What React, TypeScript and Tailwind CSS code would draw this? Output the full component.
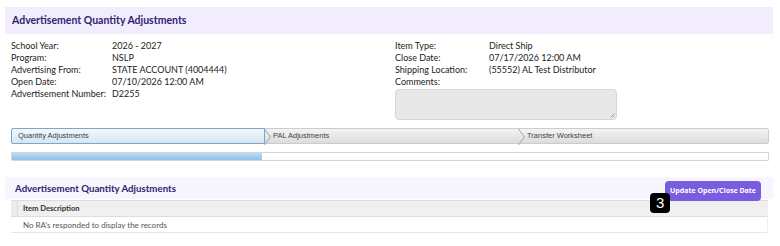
import React from 'react';

const leftInfo: [string, string][] = [
  ['School Year:', '2026 - 2027'],
  ['Program:', 'NSLP'],
  ['Advertising From:', 'STATE ACCOUNT (4004444)'],
  ['Open Date:', '07/10/2026 12:00 AM'],
  ['Advertisement Number:', 'D2255'],
];

const rightInfo: [string, string][] = [
  ['Item Type:', 'Direct Ship'],
  ['Close Date:', '07/17/2026 12:00 AM'],
  ['Shipping Location:', '(55552) AL Test Distributor'],
];

const Chevron: React.FC = () => (
  <svg width="8" height="16" viewBox="0 0 8 16" className="shrink-0">
    <path d="M0.5 0 L6.5 8 L0.5 16" fill="none" stroke="#9aa3ad" strokeWidth="1" />
  </svg>
);

export default function App() {
  return (
    <div className="w-[780px] h-[246px] bg-white overflow-hidden text-[#222] font-['Lato','Open_Sans',sans-serif]">
      <div className="pt-[7px] px-[5px]">
        {/* page heading */}
        <div className="h-[27px] bg-[#f2edfd] flex items-center pl-[7px] mr-[2px]">
          <h1 className="text-[10.5px] font-bold text-[#2f2370]">Advertisement Quantity Adjustments</h1>
        </div>

        {/* info */}
        <div className="flex pt-[6px] pl-[6px] text-[9px] leading-[12px] whitespace-nowrap">
          <div className="w-[384px]">
            {leftInfo.map(([k, v]) => (
              <div key={k} className="flex">
                <span className="w-[101px]">{k}</span>
                <span>{v}</span>
              </div>
            ))}
          </div>
          <div>
            {rightInfo.map(([k, v]) => (
              <div key={k} className="flex">
                <span className="w-[94px]">{k}</span>
                <span>{v}</span>
              </div>
            ))}
            <div>Comments:</div>
            <div className="mt-[1px] w-[222px] h-[31px] rounded-[4px] bg-[#e8e8e8] border border-[#d6d6d6] relative">
              <svg width="5" height="5" viewBox="0 0 5 5" className="absolute right-[1px] bottom-[1px]">
                <path d="M4.5 0.5 L0.5 4.5 M4.5 2.5 L2.5 4.5" stroke="#999" strokeWidth="0.8" />
              </svg>
            </div>
          </div>
        </div>

        {/* wizard steps */}
        <div className="mt-[8px] ml-[6px] mr-[6px] h-[16px] flex border border-[#c9cdd1] rounded-[2px] bg-gradient-to-b from-[#f4f4f4] to-[#dcdcdc] text-[7.5px] text-[#444] font-['Liberation_Sans',sans-serif]">
          <div className="w-[254px] flex items-center pl-[6px] bg-gradient-to-b from-[#f3f8fc] to-[#d6e6f3] border border-[#7fa6c6] -m-px rounded-l-[2px] text-[#33475b]">
            Quantity Adjustments
          </div>
          <Chevron />
          <div className="w-[246px] flex items-center pl-[1px]">PAL Adjustments</div>
          <Chevron />
          <div className="flex items-center pl-[1px]">Transfer Worksheet</div>
        </div>

        {/* progress */}
        <div className="mt-[8px] ml-[6px] mr-[6px] h-[9px] border border-[#d4d4d4] rounded-[1px] bg-white flex">
          <div className="w-[250px] bg-gradient-to-b from-[#bcdcf4] to-[#8ec0e8]" />
        </div>

        {/* section */}
        <div className="mt-[16px] h-[22px] bg-[#f7f5fd] flex items-center justify-between pl-[10px] pr-[12px] mr-[2px]">
          <h2 className="text-[9.7px] font-bold text-[#2f2370]">Advertisement Quantity Adjustments</h2>
          <div className="relative">
            <button className="h-[20px] px-[5px] rounded-[4px] bg-[#7a5cdf] text-white text-[7px] font-bold font-['Open_Sans',sans-serif]">
              Update Open/Close Date
            </button>
            <div className="absolute left-[-15px] top-[18px] w-[20px] h-[20px] rounded-[4px] bg-black text-white text-[15px] leading-[20px] text-center font-['Liberation_Sans',sans-serif]">
              3
            </div>
          </div>
        </div>

        {/* table */}
        <div className="mt-[1px] ml-[6px] mr-[7px] border-r border-[#eeeeee]">
          <div className="flex h-[17px] bg-[#f0f0f0] border-y border-[#dddddd] text-[7.6px] font-bold text-[#333]">
            <div className="w-[7px] border-r border-[#dcdcdc] bg-[#ececec]" />
            <div className="flex items-center pl-[5px]">Item Description</div>
          </div>
          <div className="flex h-[16px] border-b border-[#e6e6e6] text-[8px] text-[#555]">
            <div className="w-[7px]" />
            <div className="flex items-center pl-[5px]">No RA's responded to display the records</div>
          </div>
        </div>
      </div>
    </div>
  );
}
